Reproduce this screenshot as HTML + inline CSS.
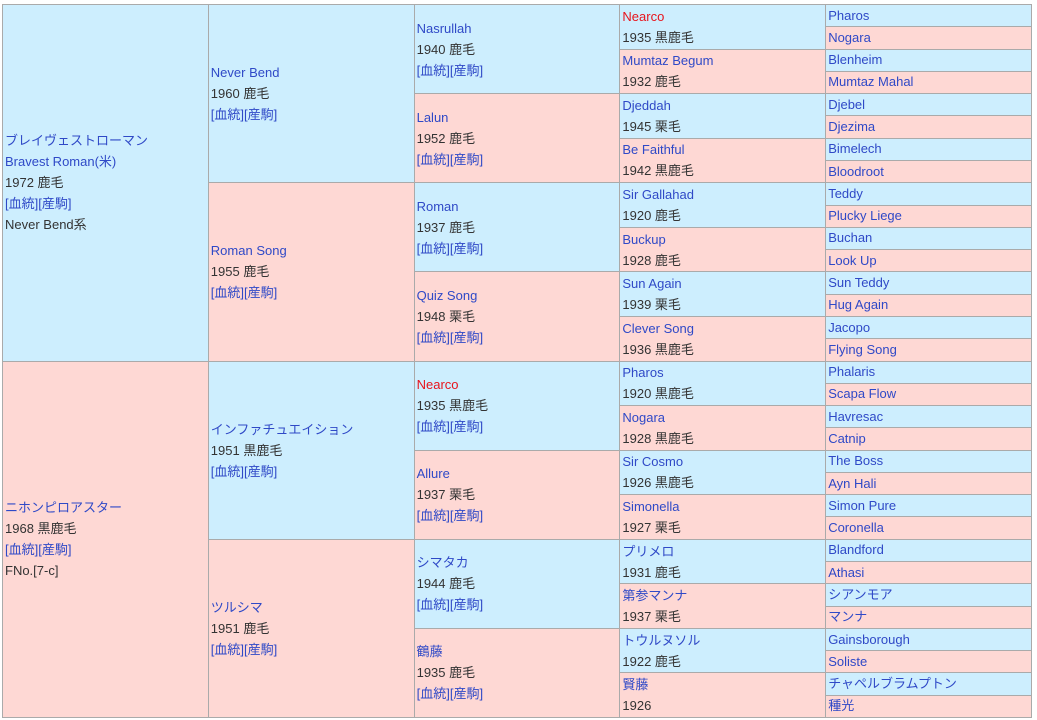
<!DOCTYPE html>
<html><head><meta charset="utf-8"><style>
body{margin:0;background:#fff;width:1037px;height:720px;overflow:hidden;font-family:"Liberation Sans","Noto Sans CJK JP",sans-serif;font-size:13px;color:#333}
.g{position:absolute;left:2px;top:4px;width:1028px;height:712px;padding:1px;background:#aaa;display:grid;gap:1px;grid-template-columns:repeat(5,1fr);grid-template-rows:repeat(32,1fr)}
.g>div{display:flex;flex-direction:column;justify-content:center;padding-left:2px;line-height:21px;overflow:hidden;white-space:nowrap}
.b{background:#cdeefe}.p{background:#fed8d4}
a{color:#2f49c7;text-decoration:none}.r{color:#e8141c}
.c5{line-height:18px!important}
</style></head><body><div class="g">
<div class="b" style="grid-column:1;grid-row:1/17"><a>ブレイヴェストローマン</a><a>Bravest Roman(米)</a><span>1972 鹿毛</span><span><a>[血統]</a><a>[産駒]</a></span><span>Never Bend系</span></div>
<div class="p" style="grid-column:1;grid-row:17/33"><a>ニホンピロアスター</a><span>1968 黒鹿毛</span><span><a>[血統]</a><a>[産駒]</a></span><span>FNo.[7-c]</span></div>

<div class="b" style="grid-column:2;grid-row:1/9"><a>Never Bend</a><span>1960 鹿毛</span><span><a>[血統]</a><a>[産駒]</a></span></div>
<div class="p" style="grid-column:2;grid-row:9/17"><a>Roman Song</a><span>1955 鹿毛</span><span><a>[血統]</a><a>[産駒]</a></span></div>
<div class="b" style="grid-column:2;grid-row:17/25"><a>インファチュエイション</a><span>1951 黒鹿毛</span><span><a>[血統]</a><a>[産駒]</a></span></div>
<div class="p" style="grid-column:2;grid-row:25/33"><a>ツルシマ</a><span>1951 鹿毛</span><span><a>[血統]</a><a>[産駒]</a></span></div>

<div class="b" style="grid-column:3;grid-row:1/5"><a>Nasrullah</a><span>1940 鹿毛</span><span><a>[血統]</a><a>[産駒]</a></span></div>
<div class="p" style="grid-column:3;grid-row:5/9"><a>Lalun</a><span>1952 鹿毛</span><span><a>[血統]</a><a>[産駒]</a></span></div>
<div class="b" style="grid-column:3;grid-row:9/13"><a>Roman</a><span>1937 鹿毛</span><span><a>[血統]</a><a>[産駒]</a></span></div>
<div class="p" style="grid-column:3;grid-row:13/17"><a>Quiz Song</a><span>1948 栗毛</span><span><a>[血統]</a><a>[産駒]</a></span></div>
<div class="b" style="grid-column:3;grid-row:17/21"><a class="r">Nearco</a><span>1935 黒鹿毛</span><span><a>[血統]</a><a>[産駒]</a></span></div>
<div class="p" style="grid-column:3;grid-row:21/25"><a>Allure</a><span>1937 栗毛</span><span><a>[血統]</a><a>[産駒]</a></span></div>
<div class="b" style="grid-column:3;grid-row:25/29"><a>シマタカ</a><span>1944 鹿毛</span><span><a>[血統]</a><a>[産駒]</a></span></div>
<div class="p" style="grid-column:3;grid-row:29/33"><a>鶴藤</a><span>1935 鹿毛</span><span><a>[血統]</a><a>[産駒]</a></span></div>

<div class="b" style="grid-column:4;grid-row:1/3"><a class="r">Nearco</a><span>1935 黒鹿毛</span></div>
<div class="p" style="grid-column:4;grid-row:3/5"><a>Mumtaz Begum</a><span>1932 鹿毛</span></div>
<div class="b" style="grid-column:4;grid-row:5/7"><a>Djeddah</a><span>1945 栗毛</span></div>
<div class="p" style="grid-column:4;grid-row:7/9"><a>Be Faithful</a><span>1942 黒鹿毛</span></div>
<div class="b" style="grid-column:4;grid-row:9/11"><a>Sir Gallahad</a><span>1920 鹿毛</span></div>
<div class="p" style="grid-column:4;grid-row:11/13"><a>Buckup</a><span>1928 鹿毛</span></div>
<div class="b" style="grid-column:4;grid-row:13/15"><a>Sun Again</a><span>1939 栗毛</span></div>
<div class="p" style="grid-column:4;grid-row:15/17"><a>Clever Song</a><span>1936 黒鹿毛</span></div>
<div class="b" style="grid-column:4;grid-row:17/19"><a>Pharos</a><span>1920 黒鹿毛</span></div>
<div class="p" style="grid-column:4;grid-row:19/21"><a>Nogara</a><span>1928 黒鹿毛</span></div>
<div class="b" style="grid-column:4;grid-row:21/23"><a>Sir Cosmo</a><span>1926 黒鹿毛</span></div>
<div class="p" style="grid-column:4;grid-row:23/25"><a>Simonella</a><span>1927 栗毛</span></div>
<div class="b" style="grid-column:4;grid-row:25/27"><a>プリメロ</a><span>1931 鹿毛</span></div>
<div class="p" style="grid-column:4;grid-row:27/29"><a>第参マンナ</a><span>1937 栗毛</span></div>
<div class="b" style="grid-column:4;grid-row:29/31"><a>トウルヌソル</a><span>1922 鹿毛</span></div>
<div class="p" style="grid-column:4;grid-row:31/33"><a>賢藤</a><span>1926</span></div>

<div class="b c5" style="grid-column:5"><a>Pharos</a></div>
<div class="p c5" style="grid-column:5"><a>Nogara</a></div>
<div class="b c5" style="grid-column:5"><a>Blenheim</a></div>
<div class="p c5" style="grid-column:5"><a>Mumtaz Mahal</a></div>
<div class="b c5" style="grid-column:5"><a>Djebel</a></div>
<div class="p c5" style="grid-column:5"><a>Djezima</a></div>
<div class="b c5" style="grid-column:5"><a>Bimelech</a></div>
<div class="p c5" style="grid-column:5"><a>Bloodroot</a></div>
<div class="b c5" style="grid-column:5"><a>Teddy</a></div>
<div class="p c5" style="grid-column:5"><a>Plucky Liege</a></div>
<div class="b c5" style="grid-column:5"><a>Buchan</a></div>
<div class="p c5" style="grid-column:5"><a>Look Up</a></div>
<div class="b c5" style="grid-column:5"><a>Sun Teddy</a></div>
<div class="p c5" style="grid-column:5"><a>Hug Again</a></div>
<div class="b c5" style="grid-column:5"><a>Jacopo</a></div>
<div class="p c5" style="grid-column:5"><a>Flying Song</a></div>
<div class="b c5" style="grid-column:5"><a>Phalaris</a></div>
<div class="p c5" style="grid-column:5"><a>Scapa Flow</a></div>
<div class="b c5" style="grid-column:5"><a>Havresac</a></div>
<div class="p c5" style="grid-column:5"><a>Catnip</a></div>
<div class="b c5" style="grid-column:5"><a>The Boss</a></div>
<div class="p c5" style="grid-column:5"><a>Ayn Hali</a></div>
<div class="b c5" style="grid-column:5"><a>Simon Pure</a></div>
<div class="p c5" style="grid-column:5"><a>Coronella</a></div>
<div class="b c5" style="grid-column:5"><a>Blandford</a></div>
<div class="p c5" style="grid-column:5"><a>Athasi</a></div>
<div class="b c5" style="grid-column:5"><a>シアンモア</a></div>
<div class="p c5" style="grid-column:5"><a>マンナ</a></div>
<div class="b c5" style="grid-column:5"><a>Gainsborough</a></div>
<div class="p c5" style="grid-column:5"><a>Soliste</a></div>
<div class="b c5" style="grid-column:5"><a>チャペルブラムプトン</a></div>
<div class="p c5" style="grid-column:5"><a>種光</a></div>
</div></body></html>
